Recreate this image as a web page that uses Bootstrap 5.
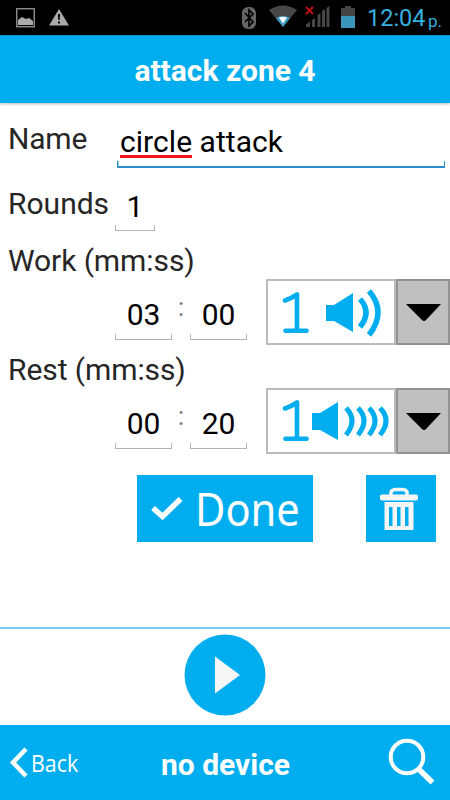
<!DOCTYPE html>
<html lang="en">
<head>
<meta charset="utf-8">
<meta name="viewport" content="width=device-width, initial-scale=1">
<title>attack zone 4</title>
<link href="https://cdn.jsdelivr.net/npm/bootstrap@5.3.0/dist/css/bootstrap.min.css" rel="stylesheet">
<style>
:root{--sky:#00aef0}
body{font-family:Roboto,"Noto Sans",sans-serif;font-size:30px;color:#262626;width:450px;height:800px;line-height:36px}
svg{display:block;flex:none}
.status-bar{height:35px;background:#000;color:#35b0df;padding-left:16px}
.bg-sky{background:var(--sky);color:#fff}
.title-bar{height:68px;border-top:1px solid #0790c8;padding-top:2px;box-shadow:0 1px 3px #0004;font-weight:700}
.clock{font-size:23.5px;line-height:37px;margin-left:9px;width:59px}
.clock-half{font-size:17px;line-height:36px;padding-top:3px;margin-left:2px;width:22px}
.row-name{height:62px;padding-left:8px}
.name-label{width:79px;padding-top:18px;letter-spacing:-.2px}
.row-rounds{height:66px;padding-left:8px}
.rounds-label{width:107px;padding-bottom:9px}
.sec-label{height:48px;padding:12px 0 0 8px;letter-spacing:-.08px}
.sec-label-tight{height:43px;padding-top:7px}
.time-row{height:66px;padding-left:115px}
.field{--line:#b4b4b4;color:#000;height:46px;padding-top:4px;text-align:center;
 background:linear-gradient(var(--line),var(--line)) 0 100%/100% 1.4px no-repeat,linear-gradient(var(--line),var(--line)) 0 100%/1px 6px no-repeat,linear-gradient(var(--line),var(--line)) 100% 100%/1px 6px no-repeat}
.field-name{--line:#2a8fc8;width:328px;height:50px;text-align:left;padding:6px 0 0 3px;background-size:100% 2px,1.5px 7px,1.5px 7px;margin:15px 0 0 30px;letter-spacing:.05px}
.misspelt{display:inline-block;height:34px;border-bottom:3px solid #f5141c;line-height:36px}
.field-sm{width:40px}
.field-md{width:57px;padding-top:3px;margin-top:15px}
.colon{width:18px;text-align:center;color:#777;font-size:25px;line-height:36px;padding-top:11px}
.picker{width:184px;height:66px;margin-left:19px}
.picker-face{width:130px;border:2px solid #bcbcbc;background:#fff}
.picker-arrow{width:54px;border:2px solid #929292;background:#c0c0c0}
.actions{padding:21px 14px 0 0}
.btn-flat{border:0;border-radius:0;height:67px;padding:0}
.btn-done{width:176px;font-family:"Noto Sans",sans-serif;font-size:45px;line-height:68px}
.btn-done span{transform:scaleX(.925);transform-origin:0 0}
.btn-trash{width:70px;margin-left:53px}
.play-zone{height:98px;border-top:2px solid #6fcdf0;padding-top:5px}
.foot{height:75px}
.back-text{font-family:"Open Sans",sans-serif;font-size:23px;margin-left:3px;width:130px;transform:scaleX(.93);transform-origin:0 0}
</style>
</head>
<body class="d-flex flex-column bg-white m-0 overflow-hidden">
<div class="status-bar d-flex flex-none">
 <svg width="56" height="35"><rect x=".75" y="8.750" width="17.5" height="18" fill="none" stroke="#999" stroke-width="1.3"/><path d="M2 25v-5l4-3 4 2 3-1 4 3v4z" fill="#aaa"/><path d="M43 9l10 16.500H33z" fill="#aaa"/><path d="M42 14h2l-.3 6h-1.400zM42 21.500h2v2h-2z" fill="#000"/></svg>
 <svg class="ms-auto" width="118" height="35"><rect x="2" y="7" width="14" height="22" rx="6" fill="#666"/><path d="M5 13l8 9-4 4V10l4 4-8 8" fill="none" stroke="#000" stroke-width="1.600"/><path d="M29 10q14-9 28 0L43 27z" fill="#474747"/><path d="M36 18q7-4 14 0l-7 9z" fill="#3b9cc8"/><path d="M39 17.500q4-1.500 8 0l-4 6z" fill="#fff"/><path d="M66 27v-2.500l4-3V27zM72 27v-7l3-2v9zM77.500 27V15l3-2v14zM82 27V11l3-2v18zM86.500 27V8l3-2v21z" fill="#474747"/><path d="M66 7l7 7m0-7l-7 7" stroke="#c40d12" stroke-width="2"/><path d="M101 8h4V6h6v2h4v8h-14z" fill="#444"/><path d="M101 16h14v12h-14z" fill="#3b96bc"/></svg>
 <div class="clock text-nowrap">12:04</div><div class="clock-half text-nowrap">p.</div>
</div>
<header class="title-bar bg-sky d-flex align-items-center justify-content-center"><span>attack zone 4</span></header>
<main class="flex-grow-1">
 <div class="row-name d-flex">
  <div class="name-label">Name</div>
  <div class="field field-name"><span class="misspelt">circle</span> attack</div>
 </div>
 <div class="row-rounds d-flex align-items-end">
  <div class="rounds-label">Rounds</div>
  <div class="field field-sm">1</div>
 </div>
 <div class="sec-label">Work (mm:ss)</div>
 <div class="time-row d-flex">
  <div class="field field-md">03</div><div class="colon">:</div><div class="field field-md">00</div>
  <div class="picker d-flex">
   <div class="picker-face"><svg width="126" height="62"><path d="M17 19.500q6-2 12-6v36M17.500 49.800H38.500" fill="none" stroke="#00aef0" stroke-width="4.600" stroke-linecap="round" stroke-linejoin="round"/><path d="M58 24h8l19-12v39L66 40h-8z" fill="#00aef0"/><path d="M92 18q12 13 0 28M101 10q18 21 0 44" fill="none" stroke="#00aef0" stroke-width="5.500"/></svg></div>
   <div class="picker-arrow"><svg width="50" height="62"><path d="M8 23h35L28 39q-2 2-4 0z"/></svg></div>
  </div>
 </div>
 <div class="sec-label sec-label-tight">Rest (mm:ss)</div>
 <div class="time-row d-flex">
  <div class="field field-md">00</div><div class="colon">:</div><div class="field field-md">20</div>
  <div class="picker d-flex">
   <div class="picker-face"><svg width="126" height="62"><path d="M17 18.500q6-2 12-6v36M17.500 48.800H38.500" fill="none" stroke="#00aef0" stroke-width="4.600" stroke-linecap="round" stroke-linejoin="round"/><path d="M44 23h8l18-11v38L52 40h-8z" fill="#00aef0"/><path d="M78 18q12 12 0 27M90 18q12 12 0 27M101 18q12 12 0 27M112 18q12 12 0 27" fill="none" stroke="#00aef0" stroke-width="5"/></svg></div>
   <div class="picker-arrow"><svg width="50" height="62"><path d="M8 23h35L28 39q-2 2-4 0z"/></svg></div>
  </div>
 </div>
 <div class="actions d-flex justify-content-end">
  <button class="btn btn-flat btn-done bg-sky d-flex"><svg width="58" height="67"><path d="M16 33l9.500 8.500 18-17.500" fill="none" stroke="#fff" stroke-width="5.500"/></svg><span>Done</span></button>
  <button class="btn btn-flat btn-trash bg-sky" aria-label="Delete"><svg width="70" height="67"><path d="M25 20v-3q1-2.500 5-2.500h6q4 0 5 2.500v3" fill="none" stroke="#f6f6f6" stroke-width="3.500"/><rect x="14" y="19.500" width="38" height="6" rx="2" fill="#f6f6f6"/><path fill-rule="evenodd" d="M18.500 27h29V55h-29zM23 32v19h3.500V32zM31 32v19h3.500V32zM39 32v19h3.500V32z" fill="#f6f6f6"/></svg></button>
 </div>
</main>
<div class="play-zone d-flex justify-content-center"><svg width="82" height="82"><circle cx="41" cy="41" r="40.500" fill="#00aef0"/><path d="M31 22.500l25 18.500-25 18.500z" fill="#f6f6f6"/></svg></div>
<footer class="foot bg-sky d-flex align-items-center">
 <svg width="28" height="75"><path d="M26 24L13 37.500 26 51" fill="none" stroke="#fff" stroke-width="4.500"/></svg>
 <div class="back-text">Back</div>
 <div class="fw-bold pt-1">no device</div>
 <svg class="ms-auto me-1" width="60" height="75"><circle cx="21" cy="32" r="16.300" fill="none" stroke="#fff" stroke-width="4"/><path d="M31.500 43l15 14.500" stroke="#fff" stroke-width="5.500"/></svg>
</footer>
<script src="https://cdn.jsdelivr.net/npm/bootstrap@5.3.0/dist/js/bootstrap.bundle.min.js"></script>
</body>
</html>
